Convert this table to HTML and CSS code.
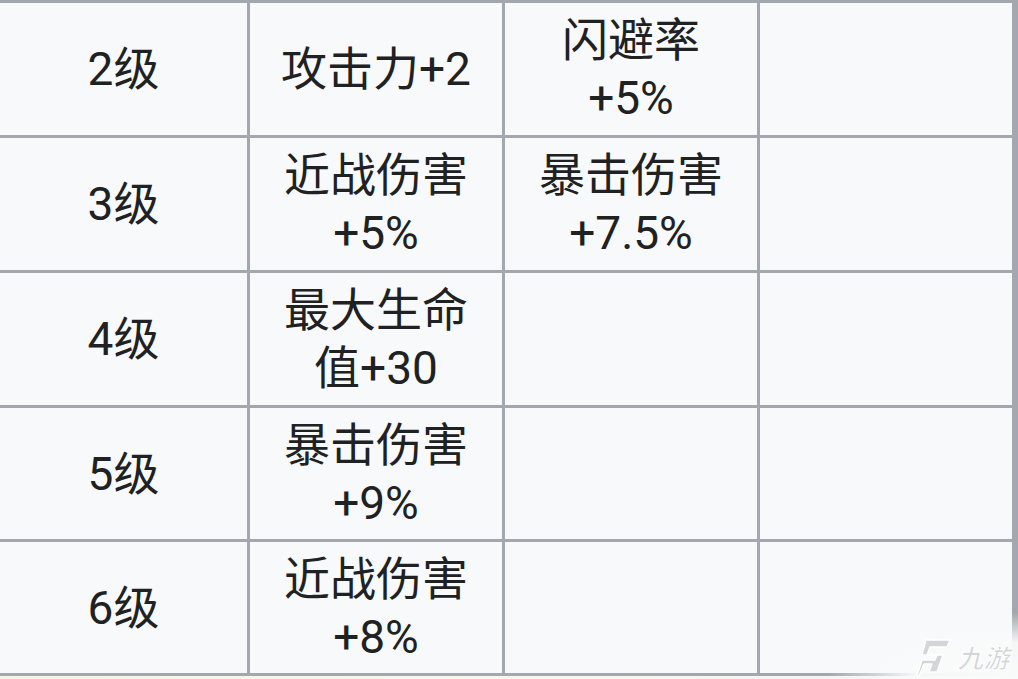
FILE: index.html
```html
<!DOCTYPE html>
<html lang="zh-CN">
<head>
<meta charset="utf-8">
<title>等级属性</title>
<link rel="stylesheet" href="styles.css">
</head>
<body>
<div class="page">
  <div class="grid">
    <div class="cell">2级</div>
    <div class="cell">攻击力+2</div>
    <div class="cell">闪避率<br>+5%</div>
    <div class="cell"></div>

    <div class="cell">3级</div>
    <div class="cell">近战伤害<br>+5%</div>
    <div class="cell">暴击伤害<br>+7.5%</div>
    <div class="cell"></div>

    <div class="cell">4级</div>
    <div class="cell">最大生命<br>值+30</div>
    <div class="cell"></div>
    <div class="cell"></div>

    <div class="cell">5级</div>
    <div class="cell">暴击伤害<br>+9%</div>
    <div class="cell"></div>
    <div class="cell"></div>

    <div class="cell">6级</div>
    <div class="cell">近战伤害<br>+8%</div>
    <div class="cell"></div>
    <div class="cell"></div>
  </div>
  <div class="watermark">
    <svg class="wm-logo" width="36" height="40" viewBox="0 0 36 40" aria-hidden="true">
      <path d="M10 2 L34 2 L31 9 L14 9 L11 17 L27 17 L21 34 L13 34 L16 26 L8 26 L3 38 L1 38 L6 22 L19 22 L21 17 L6 17 Z" fill="#d3d5d8" stroke="#ffffff" stroke-width="1.4" stroke-linejoin="round"/>
    </svg>
    <span class="wm-text">九游</span>
  </div>
</div>
</body>
</html>
```

FILE: styles.css
```css
html, body {
  margin: 0;
  padding: 0;
}

body {
  width: 1018px;
  height: 679px;
  overflow: hidden;
  background: linear-gradient(90deg, #f3f6e6 0%, #f6f8ee 60%, #f2f0f6 100%);
  font-family: Roboto, "Noto Sans CJK SC", sans-serif;
  color: #202122;
}

.page {
  position: relative;
  width: 1018px;
  height: 679px;
}

.grid {
  margin-left: -3px;
  width: 1018px;
  display: grid;
  grid-template-columns: 247px 252px 252px 252px;
  grid-template-rows: 132px 132px 132px 131px 131px;
  gap: 3px;
  padding: 3px;
  background: #a3a8ae;
}

.cell {
  background: #f8f9fa;
  display: flex;
  align-items: center;
  justify-content: center;
  text-align: center;
  font-size: 46px;
  line-height: 58px;
  padding: 0 12px;
}

.watermark {
  position: absolute;
  right: 0;
  bottom: 0;
  width: 190px;
  height: 66px;
  display: flex;
  align-items: flex-end;
  justify-content: flex-end;
  gap: 4px;
  padding-right: 10px;
  box-sizing: border-box;
  background: radial-gradient(ellipse 100% 100% at 100% 100%, rgba(249, 250, 250, 1) 0%, rgba(249, 250, 250, 0.95) 55%, rgba(249, 250, 250, 0) 100%);
}

.wm-logo {
  display: block;
  margin-bottom: 1px;
}

.wm-text {
  font-family: "Noto Sans CJK SC", sans-serif;
  font-size: 26px;
  line-height: 32px;
  font-weight: 700;
  color: #d3d5d8;
  -webkit-text-stroke: 1px #ffffff;
  transform: skewX(-14deg);
  transform-origin: bottom left;
  margin-bottom: 6px;
}
```
